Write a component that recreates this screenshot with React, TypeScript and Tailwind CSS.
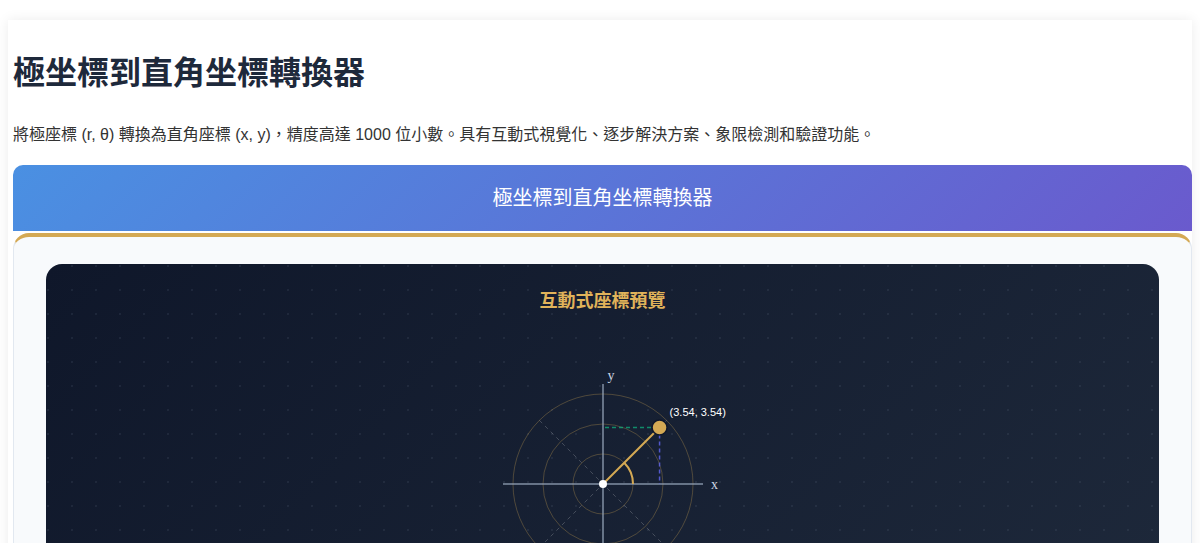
import React from 'react';

const FONT = '"Liberation Sans", "Noto Sans CJK TC", sans-serif';

function CoordinatePreview() {
    const cx = 150;
    const cy = 150;
    const scale = 16;
    const r = 5;
    const theta = Math.PI / 4;
    const px = cx + r * scale * Math.cos(theta);
    const py = cy - r * scale * Math.sin(theta);
    const d = 90 * Math.cos(Math.PI / 4);
    const arcX = cx + 30 * Math.cos(theta);
    const arcY = cy - 30 * Math.sin(theta);

    return (
        <svg width="300" height="300" viewBox="0 0 300 300" className="block mx-auto">
            {/* rings */}
            {[30, 60, 90].map((rad) => (
                <circle key={rad} cx={cx} cy={cy} r={rad} fill="none" stroke="#d4a954" strokeOpacity="0.3" strokeWidth="1" />
            ))}
            {/* diagonals */}
            <line x1={cx - d} y1={cy - d} x2={cx + d} y2={cy + d} stroke="#ffffff" strokeOpacity="0.2" strokeDasharray="4 4" />
            <line x1={cx + d} y1={cy - d} x2={cx - d} y2={cy + d} stroke="#ffffff" strokeOpacity="0.2" strokeDasharray="4 4" />
            {/* axes */}
            <line x1="50" y1={cy} x2="250" y2={cy} stroke="#94a3b8" strokeOpacity="0.85" strokeWidth="1.5" />
            <line x1={cx} y1="50" x2={cx} y2="250" stroke="#94a3b8" strokeOpacity="0.85" strokeWidth="1.5" />
            <text x="258" y="155" fill="#cbd5e1" fontSize="14" fontFamily='"Liberation Serif", serif'>x</text>
            <text x="158" y="46" fill="#cbd5e1" fontSize="14" fontFamily='"Liberation Serif", serif' textAnchor="middle">y</text>
            {/* projections */}
            <line x1={cx + 2} y1={py} x2={px} y2={py} stroke="#10b981" strokeOpacity="0.7" strokeWidth="1.5" strokeDasharray="4 3" />
            <line x1={px} y1={py} x2={px} y2={cy} stroke="#6366f1" strokeOpacity="0.8" strokeWidth="1.5" strokeDasharray="4 3" />
            {/* radius + angle */}
            <line x1={cx} y1={cy} x2={px} y2={py} stroke="#d4a954" strokeWidth="2" />
            <path d={`M${cx + 30} ${cy} A30 30 0 0 0 ${arcX} ${arcY}`} fill="none" stroke="#d4a954" strokeWidth="2" />
            <circle cx={px} cy={py} r="7.5" fill="#d4a954" stroke="#0f172a" strokeWidth="1.5" />
            <circle cx={cx} cy={cy} r="4" fill="#ffffff" />
            <text x={px + 10} y={py - 11} fill="#ffffff" fontSize="11" fontFamily={FONT}>(3.54, 3.54)</text>
        </svg>
    );
}

export default function App() {
    return (
        <div lang="zh-TW" className="h-[543px] overflow-hidden bg-white pt-5" style={{ fontFamily: FONT }}>
            <div className="ml-2 w-[1184px] bg-white pl-[5px] pt-[34px] shadow-[0_0_12px_rgba(0,0,0,0.08)]">
                {/* Header */}
                <h1 className="text-[32px] leading-[38px] font-bold text-[#1e293b]">極坐標到直角坐標轉換器</h1>
                <p className="mt-[31px] text-base leading-6 text-[#333333]">
                    將極座標 (r, θ) 轉換為直角座標 (x, y)，精度高達 1000 位小數。具有互動式視覺化、逐步解決方案、象限檢測和驗證功能。
                </p>

                {/* Calculator */}
                <div className="mt-[18px] h-[66px] rounded-t-[10px] bg-[linear-gradient(135deg,#4a90e2,#6a5acd)] flex items-center justify-center">
                    <span className="text-xl text-white">極坐標到直角坐標轉換器</span>
                </div>

                <div className="mt-[2px] rounded-2xl border border-[#e2e8f0] border-t-4 border-t-[#d4a954] bg-[#f8fafc] px-8 pt-[27px] pb-8">
                    <div className="rounded-2xl bg-[radial-gradient(circle_at_2px_2px,rgba(148,163,184,0.1)_1px,transparent_1.5px),linear-gradient(135deg,#0f172a,#1e293b)] bg-[length:24px_24px,100%_100%] pt-6 pb-8">
                        <h3 className="mb-[19px] text-center text-lg leading-[27px] font-bold text-[#e0b35a]">互動式座標預覽</h3>
                        <CoordinatePreview />
                    </div>
                </div>
            </div>
        </div>
    );
}
